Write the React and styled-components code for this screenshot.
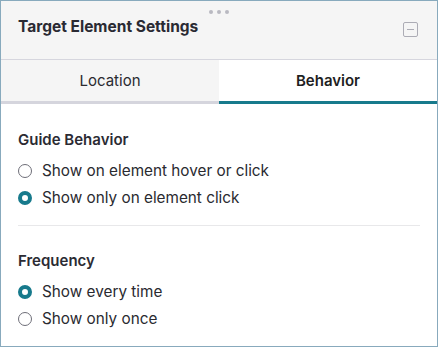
import React from 'react'
import styled, { createGlobalStyle } from 'styled-components'

const Global = createGlobalStyle`
    body {
        margin: 0;
        background: #fff;
        font-family: Inter, "Noto Sans", sans-serif;
    }
`

const Panel = styled.div`
    position: relative;
    width: 438px;
    height: 347px;
    box-sizing: border-box;
    border: 1px solid #88aabd;
    background: #fff;
    color: #2a2a31;
`

const Handle = styled.div`
    position: absolute;
    top: 9px;
    left: 50%;
    transform: translateX(-50%);
    display: flex;
    gap: 4px;
    span {
        width: 4px;
        height: 4px;
        border-radius: 50%;
        background: #b9b9c1;
    }
`

const Header = styled.div`
    height: 58px;
    box-sizing: content-box;
    display: flex;
    align-items: flex-start;
    justify-content: space-between;
    padding: 0 19px 0 17px;
    background: #f5f5f5;
    border-bottom: 1px solid #d6d6de;
`

const Title = styled.h2`
    margin: 16px 0 0;
    font-size: 15.5px;
    line-height: 20px;
    font-weight: 700;
    color: #2a2a33;
`

const Minimize = styled.button`
    margin-top: 21px;
    width: 15px;
    height: 15px;
    padding: 0;
    box-sizing: border-box;
    border: 1.5px solid #acacb5;
    border-radius: 2px;
    background: transparent;
    display: flex;
    align-items: center;
    justify-content: center;
    &::after {
        content: '';
        width: 7px;
        height: 1.5px;
        background: #acacb5;
    }
`

const Tabs = styled.div`
    display: grid;
    grid-template-columns: 1fr 1fr;
`

const Tab = styled.div`
    height: 41px;
    display: flex;
    align-items: center;
    justify-content: center;
    font-size: 15px;
    font-weight: ${p => (p.$active ? 600 : 400)};
    color: ${p => (p.$active ? '#1e1e22' : '#2a2a30')};
    background: ${p => (p.$active ? '#fff' : '#f5f5f5')};
    border-bottom: 3px solid ${p => (p.$active ? '#177a8c' : '#d5d5dd')};
`

const Content = styled.div`
    padding: 1px 17px 0;
`

const Section = styled.div`
    padding: 25px 0 14px;
    & + & {
        border-top: 1px solid #e8e8ea;
    }
`

const Heading = styled.h3`
    margin: 0 0 7px;
    font-size: 15px;
    line-height: 20px;
    font-weight: 600;
    color: #2b2b33;
`

const Option = styled.label`
    height: 27px;
    display: flex;
    align-items: center;
    gap: 10px;
    font-size: 15.3px;
    color: #2a2a30;
`

const Radio = styled.span`
    width: 14px;
    height: 14px;
    box-sizing: border-box;
    border-radius: 50%;
    background: #fff;
    border: ${p => (p.$checked ? '4.5px solid #177a8c' : '1px solid #6e6e78')};
    flex-shrink: 0;
`

const groups = [
    {
        title: 'Guide Behavior',
        options: ['Show on element hover or click', 'Show only on element click'],
        selected: 1,
    },
    {
        title: 'Frequency',
        options: ['Show every time', 'Show only once'],
        selected: 0,
    },
]

const App = () => {
    return (
        <Panel>
            <Global />
            <Handle>
                <span />
                <span />
                <span />
            </Handle>
            <Header>
                <Title>Target Element Settings</Title>
                <Minimize aria-label="Minimize" />
            </Header>
            <Tabs>
                <Tab>Location</Tab>
                <Tab $active>Behavior</Tab>
            </Tabs>
            <Content>
                {groups.map(g => (
                    <Section key={g.title}>
                        <Heading>{g.title}</Heading>
                        {g.options.map((o, i) => (
                            <Option key={o}>
                                <Radio $checked={i === g.selected} />
                                {o}
                            </Option>
                        ))}
                    </Section>
                ))}
            </Content>
        </Panel>
    )
}

export default App
